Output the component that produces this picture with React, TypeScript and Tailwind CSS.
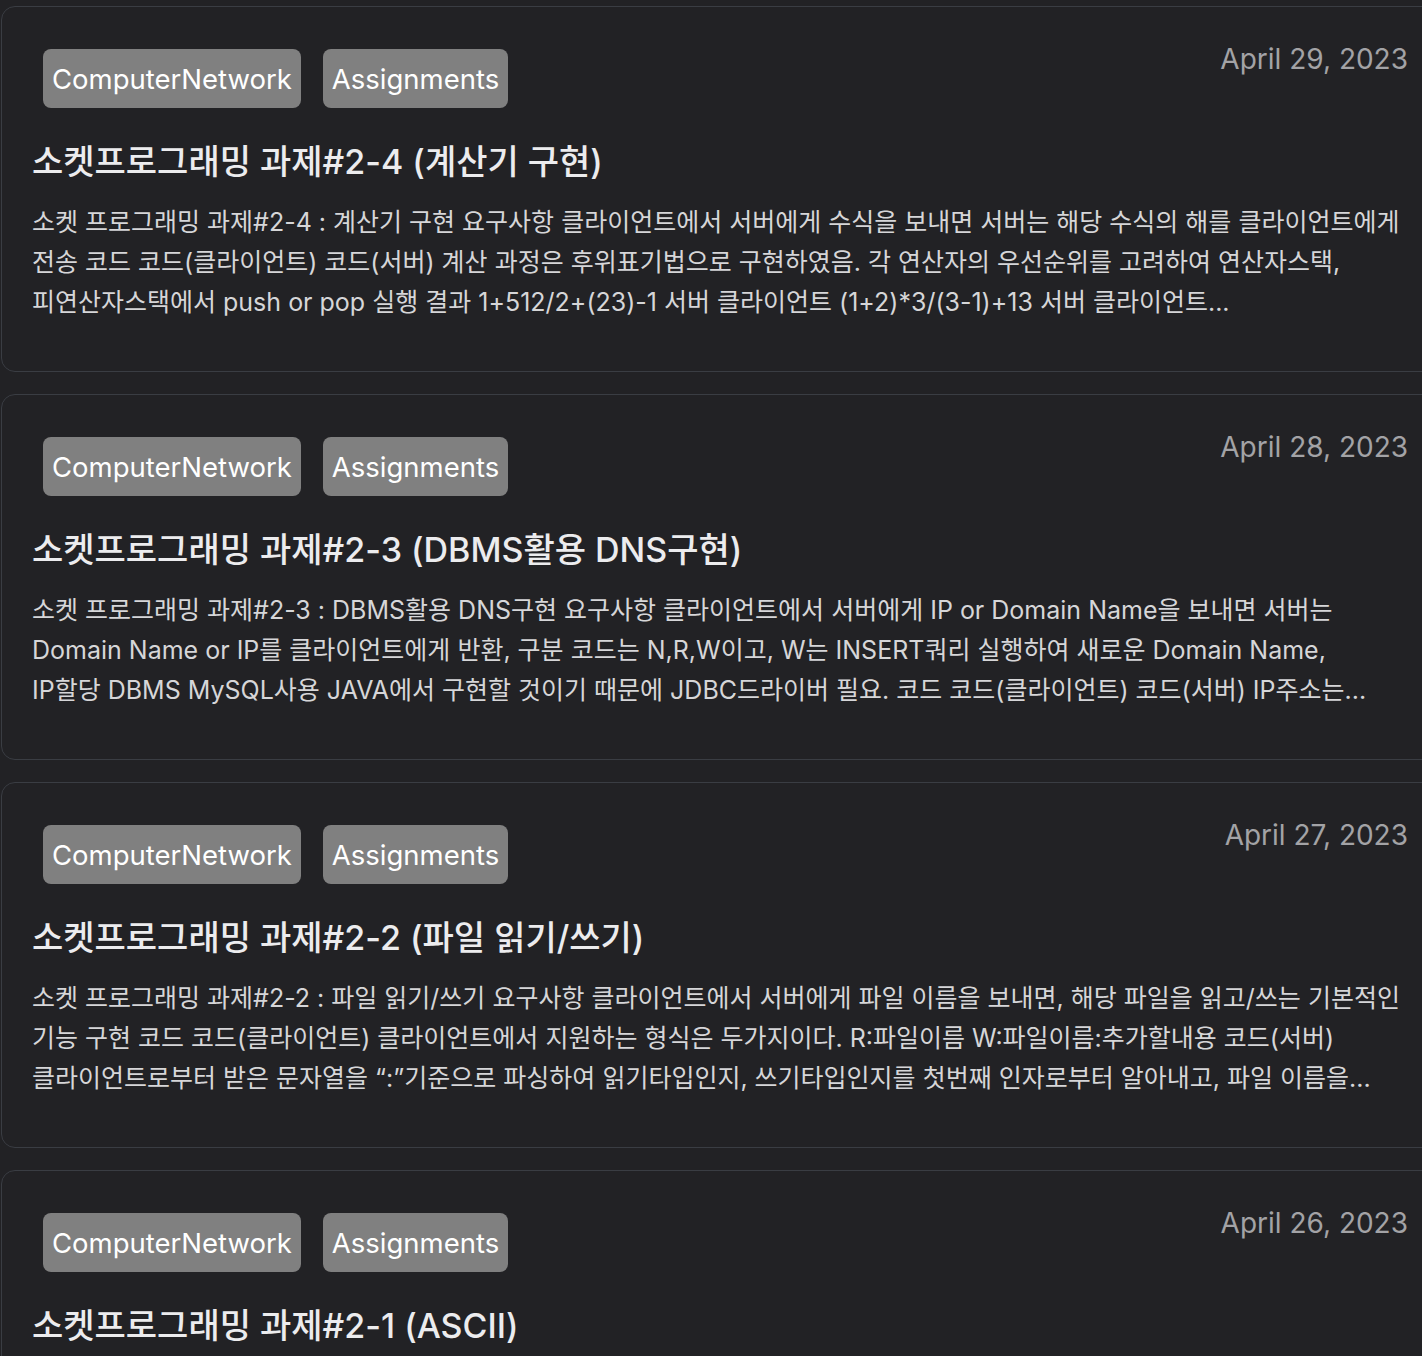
import React from "react";

type Post = {
  date: string;
  title: string;
  lines: string[];
};

const posts: Post[] = [
  {
    date: "April 29, 2023",
    title: "소켓프로그래밍 과제#2-4 (계산기 구현)",
    lines: [
      "소켓 프로그래밍 과제#2-4 : 계산기 구현 요구사항 클라이언트에서 서버에게 수식을 보내면 서버는 해당 수식의 해를 클라이언트에게",
      "전송 코드 코드(클라이언트) 코드(서버) 계산 과정은 후위표기법으로 구현하였음. 각 연산자의 우선순위를 고려하여 연산자스택,",
      "피연산자스택에서 push or pop 실행 결과 1+512/2+(23)-1 서버 클라이언트 (1+2)*3/(3-1)+13 서버 클라이언트...",
    ],
  },
  {
    date: "April 28, 2023",
    title: "소켓프로그래밍 과제#2-3 (DBMS활용 DNS구현)",
    lines: [
      "소켓 프로그래밍 과제#2-3 : DBMS활용 DNS구현 요구사항 클라이언트에서 서버에게 IP or Domain Name을 보내면 서버는",
      "Domain Name or IP를 클라이언트에게 반환, 구분 코드는 N,R,W이고, W는 INSERT쿼리 실행하여 새로운 Domain Name,",
      "IP할당 DBMS MySQL사용 JAVA에서 구현할 것이기 때문에 JDBC드라이버 필요. 코드 코드(클라이언트) 코드(서버) IP주소는...",
    ],
  },
  {
    date: "April 27, 2023",
    title: "소켓프로그래밍 과제#2-2 (파일 읽기/쓰기)",
    lines: [
      "소켓 프로그래밍 과제#2-2 : 파일 읽기/쓰기 요구사항 클라이언트에서 서버에게 파일 이름을 보내면, 해당 파일을 읽고/쓰는 기본적인",
      "기능 구현 코드 코드(클라이언트) 클라이언트에서 지원하는 형식은 두가지이다. R:파일이름 W:파일이름:추가할내용 코드(서버)",
      "클라이언트로부터 받은 문자열을 “:”기준으로 파싱하여 읽기타입인지, 쓰기타입인지를 첫번째 인자로부터 알아내고, 파일 이름을...",
    ],
  },
  {
    date: "April 26, 2023",
    title: "소켓프로그래밍 과제#2-1 (ASCII)",
    lines: [
      "소켓 프로그래밍 과제#2-1 : ASCII 요구사항 클라이언트에서 서버에게 문자열을 보내면 서버는 해당 문자열의 ASCII 코드를",
      "클라이언트에게 전송 코드 코드(클라이언트) 코드(서버) 실행 결과",
      "",
    ],
  },
];

function Tag({ label }: { label: string }) {
  return (
    <span className="flex h-[59px] items-center rounded-[8px] bg-[#808080] px-[9px] text-[27.5px] leading-[34px] text-white">
      {label}
    </span>
  );
}

function Card({ post }: { post: Post }) {
  return (
    <div className="ml-px h-[366px] w-[1440px] shrink-0 rounded-[14px] border border-[#3a3d43] bg-[#222225] pl-[30px] pr-[32px] pt-[30px]">
      <div className="flex items-start justify-between">
        <div className="ml-[11px] mt-[12px] flex gap-[22px]">
          <Tag label="ComputerNetwork" />
          <Tag label="Assignments" />
        </div>
        <div className="mt-[6px] text-[28px] leading-[32px] text-[#a3a3a6]">{post.date}</div>
      </div>
      <h2 className="mt-[30px] text-[34px] font-medium leading-[48px] text-[#ececee]">{post.title}</h2>
      <div className="mt-[16px] text-[25px] leading-[40px] text-[#d6d6d8]">
        {post.lines.map((l, i) => (
          <div key={i} className="h-[40px] whitespace-nowrap">
            {l}
          </div>
        ))}
      </div>
    </div>
  );
}

export default function App() {
  return (
    <div
      className="h-[1356px] w-full overflow-hidden bg-[#222225] pt-[6px]"
      style={{ fontFamily: '"Inter", "Noto Sans CJK KR", sans-serif' }}
    >
      <div className="flex flex-col gap-[22px]">
        {posts.map((p, i) => (
          <Card key={i} post={p} />
        ))}
      </div>
    </div>
  );
}
